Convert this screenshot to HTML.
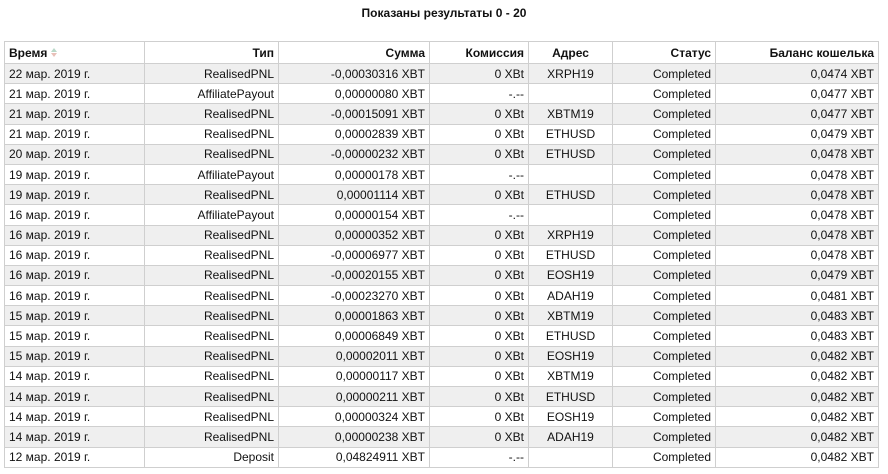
<!DOCTYPE html>
<html><head><meta charset="utf-8"><style>
body{margin:0;background:#fff;font-family:"Liberation Sans",sans-serif;font-size:12px;color:#111;}
h1{margin:0;position:absolute;top:5px;left:0;width:888px;text-align:center;font-size:12px;font-weight:bold;line-height:16px}
table{position:absolute;top:41px;left:4px;border-collapse:collapse;table-layout:fixed;width:874px}
td,th{border:1px solid #cfcfcf;height:19.2px;padding:0 4px;text-align:right;white-space:nowrap;overflow:hidden}
th{height:21px;font-weight:bold}
td:first-child,th:first-child{text-align:left}
td:nth-child(5){text-align:center}
tr:nth-child(odd) td{background:#efefef}
.s{display:inline-block;width:6px;height:10px;vertical-align:middle;margin-left:4px;position:relative}
.s:before{content:"";position:absolute;top:0;left:0;border:3px solid transparent;border-bottom:4px solid #b8d8c8;border-top:0}
.s:after{content:"";position:absolute;top:5px;left:0;border:3px solid transparent;border-top:4px solid #e8c0b8;border-bottom:0}
</style></head><body>
<h1>Показаны результаты 0 - 20</h1>
<table>
<colgroup><col style="width:140px"><col style="width:134px"><col style="width:151px"><col style="width:99px"><col style="width:84px"><col style="width:103px"><col style="width:163px"></colgroup>
<thead><tr><th>Время<span class="s"></span></th><th>Тип</th><th>Сумма</th><th>Комиссия</th><th style="text-align:center">Адрес</th><th>Статус</th><th>Баланс кошелька</th></tr></thead>
<tbody>
<tr><td>22 мар. 2019 г.</td><td>RealisedPNL</td><td>-0,00030316 XBT</td><td>0 XBt</td><td>XRPH19</td><td>Completed</td><td>0,0474 XBT</td></tr>
<tr><td>21 мар. 2019 г.</td><td>AffiliatePayout</td><td>0,00000080 XBT</td><td>-.--</td><td></td><td>Completed</td><td>0,0477 XBT</td></tr>
<tr><td>21 мар. 2019 г.</td><td>RealisedPNL</td><td>-0,00015091 XBT</td><td>0 XBt</td><td>XBTM19</td><td>Completed</td><td>0,0477 XBT</td></tr>
<tr><td>21 мар. 2019 г.</td><td>RealisedPNL</td><td>0,00002839 XBT</td><td>0 XBt</td><td>ETHUSD</td><td>Completed</td><td>0,0479 XBT</td></tr>
<tr><td>20 мар. 2019 г.</td><td>RealisedPNL</td><td>-0,00000232 XBT</td><td>0 XBt</td><td>ETHUSD</td><td>Completed</td><td>0,0478 XBT</td></tr>
<tr><td>19 мар. 2019 г.</td><td>AffiliatePayout</td><td>0,00000178 XBT</td><td>-.--</td><td></td><td>Completed</td><td>0,0478 XBT</td></tr>
<tr><td>19 мар. 2019 г.</td><td>RealisedPNL</td><td>0,00001114 XBT</td><td>0 XBt</td><td>ETHUSD</td><td>Completed</td><td>0,0478 XBT</td></tr>
<tr><td>16 мар. 2019 г.</td><td>AffiliatePayout</td><td>0,00000154 XBT</td><td>-.--</td><td></td><td>Completed</td><td>0,0478 XBT</td></tr>
<tr><td>16 мар. 2019 г.</td><td>RealisedPNL</td><td>0,00000352 XBT</td><td>0 XBt</td><td>XRPH19</td><td>Completed</td><td>0,0478 XBT</td></tr>
<tr><td>16 мар. 2019 г.</td><td>RealisedPNL</td><td>-0,00006977 XBT</td><td>0 XBt</td><td>ETHUSD</td><td>Completed</td><td>0,0478 XBT</td></tr>
<tr><td>16 мар. 2019 г.</td><td>RealisedPNL</td><td>-0,00020155 XBT</td><td>0 XBt</td><td>EOSH19</td><td>Completed</td><td>0,0479 XBT</td></tr>
<tr><td>16 мар. 2019 г.</td><td>RealisedPNL</td><td>-0,00023270 XBT</td><td>0 XBt</td><td>ADAH19</td><td>Completed</td><td>0,0481 XBT</td></tr>
<tr><td>15 мар. 2019 г.</td><td>RealisedPNL</td><td>0,00001863 XBT</td><td>0 XBt</td><td>XBTM19</td><td>Completed</td><td>0,0483 XBT</td></tr>
<tr><td>15 мар. 2019 г.</td><td>RealisedPNL</td><td>0,00006849 XBT</td><td>0 XBt</td><td>ETHUSD</td><td>Completed</td><td>0,0483 XBT</td></tr>
<tr><td>15 мар. 2019 г.</td><td>RealisedPNL</td><td>0,00002011 XBT</td><td>0 XBt</td><td>EOSH19</td><td>Completed</td><td>0,0482 XBT</td></tr>
<tr><td>14 мар. 2019 г.</td><td>RealisedPNL</td><td>0,00000117 XBT</td><td>0 XBt</td><td>XBTM19</td><td>Completed</td><td>0,0482 XBT</td></tr>
<tr><td>14 мар. 2019 г.</td><td>RealisedPNL</td><td>0,00000211 XBT</td><td>0 XBt</td><td>ETHUSD</td><td>Completed</td><td>0,0482 XBT</td></tr>
<tr><td>14 мар. 2019 г.</td><td>RealisedPNL</td><td>0,00000324 XBT</td><td>0 XBt</td><td>EOSH19</td><td>Completed</td><td>0,0482 XBT</td></tr>
<tr><td>14 мар. 2019 г.</td><td>RealisedPNL</td><td>0,00000238 XBT</td><td>0 XBt</td><td>ADAH19</td><td>Completed</td><td>0,0482 XBT</td></tr>
<tr><td>12 мар. 2019 г.</td><td>Deposit</td><td>0,04824911 XBT</td><td>-.--</td><td></td><td>Completed</td><td>0,0482 XBT</td></tr>
</tbody></table>
</body></html>
